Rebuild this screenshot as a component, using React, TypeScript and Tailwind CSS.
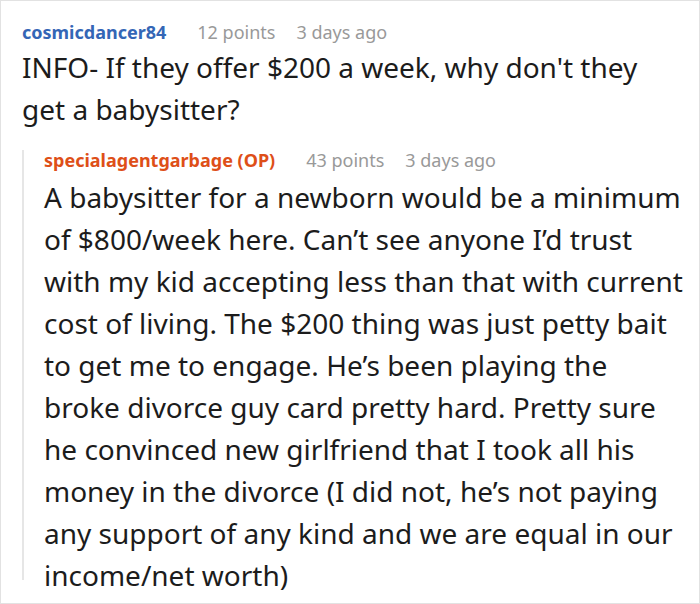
import React from "react";

const top = ["INFO- If they offer $200 a week, why don't they", "get a babysitter?"];
const reply = [
  "A babysitter for a newborn would be a minimum",
  "of $800/week here. Can\u2019t see anyone I\u2019d trust",
  "with my kid accepting less than that with current",
  "cost of living. The $200 thing was just petty bait",
  "to get me to engage. He\u2019s been playing the",
  "broke divorce guy card pretty hard. Pretty sure",
  "he convinced new girlfriend that I took all his",
  "money in the divorce (I did not, he\u2019s not paying",
  "any support of any kind and we are equal in our",
  "income/net worth)",
];

export default function App() {
  return (
    <div
      className="w-[700px] h-[604px] overflow-hidden border border-[#e2e2e2] bg-white pl-[21px] pt-[19px] text-[#1c1c1c]"
      style={{ fontFamily: '"Noto Sans", "Open Sans", sans-serif' }}
    >
      <div className="flex items-center text-[18px] leading-[24px] whitespace-nowrap">
        <span className="font-bold text-[#3466b6]">cosmicdancer84</span>
        <span className="ml-[31px] text-[#999999]">12 points</span>
        <span className="ml-[21px] text-[#999999]">3 days ago</span>
      </div>
      <div className="mt-[2px] text-[28px] leading-[42px] whitespace-nowrap">
        {top.map((l, i) => (
          <div key={i}>{l}</div>
        ))}
      </div>
      <div className="mt-[28px] h-[430px] border-l-2 border-[#e6e6e6] pl-[20px]">
        <div className="-mt-[8px] flex items-center text-[18px] leading-[20px] whitespace-nowrap">
          <span className="font-bold text-[#de4f18]">specialagentgarbage (OP)</span>
          <span className="ml-[31px] text-[#999999]">43 points</span>
          <span className="ml-[21px] text-[#999999]">3 days ago</span>
        </div>
        <div className="mt-[6px] text-[28px] leading-[42px] whitespace-nowrap">
          {reply.map((l, i) => (
            <div key={i}>{l}</div>
          ))}
        </div>
      </div>
    </div>
  );
}
